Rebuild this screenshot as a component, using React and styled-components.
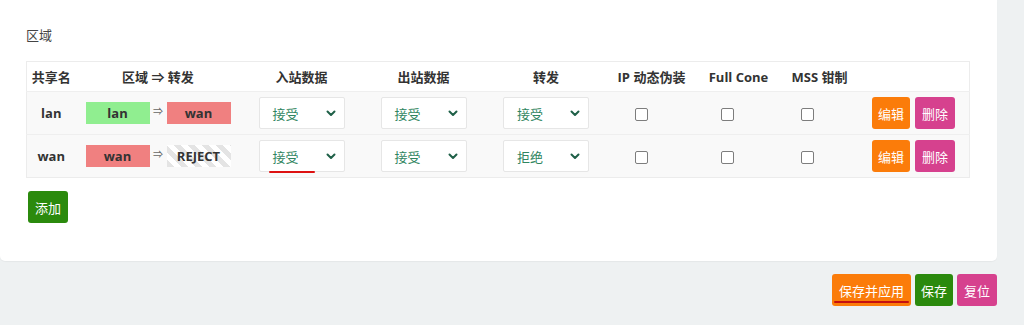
import React from "react";
import styled, { createGlobalStyle, css } from "styled-components";

const Global = createGlobalStyle`
  html, body { margin: 0; padding: 0; }
  body {
    background: #eef1f2;
    font-family: "Open Sans", "Noto Sans CJK SC", sans-serif;
    font-size: 13px;
    color: #333;
    width: 1024px;
    height: 325px;
    overflow: hidden;
  }
`;

const Page = styled.div`
  display: flex;
  flex-direction: column;
  width: 997px;
`;

const Card = styled.section`
  background: #fff;
  border-radius: 0 0 5px 5px;
  padding: 25px 27px 38px 26px;
  height: 261px;
  box-sizing: border-box;
  box-shadow: 0 1px 1px rgba(0,0,0,0.04);
`;

const Title = styled.div`
  font-size: 13px;
  color: #444;
  height: 20px;
  line-height: 20px;
  margin-bottom: 16px;
`;

const Table = styled.table`
  width: 944px;
  border-collapse: collapse;
  table-layout: fixed;
  border: 1px solid #ececec;
`;

const Th = styled.th`
  height: 29px;
  padding: 0;
  font-weight: 700;
  font-size: 13px;
  color: #333;
  text-align: ${(p) => p.$align || "center"};
  background: #fff;
`;

const Tr = styled.tr`
  background: #f9f9f9;
  border-top: 1px solid #efefef;
`;

const Td = styled.td`
  height: 42px;
  padding: 0;
  text-align: ${(p) => p.$align || "center"};
  font-weight: ${(p) => (p.$bold ? 700 : 400)};
  ${(p) => p.$pr && css`padding-right: ${p.$pr}px;`}
`;

const ZoneFlow = styled.div`
  display: flex;
  align-items: center;
  justify-content: center;
`;

const Badge = styled.span`
  display: inline-flex;
  align-items: center;
  justify-content: center;
  width: 64px;
  height: 22px;
  font-weight: 700;
  color: #333;
  ${(p) =>
    p.$kind === "lan"
      ? css`background: #90ee90;`
      : p.$kind === "wan"
      ? css`background: #f08080;`
      : css`
          background: repeating-linear-gradient(
            45deg,
            #e4e4e4 0px,
            #e4e4e4 5px,
            #ffffff 5px,
            #ffffff 10px
          );
        `}
`;

const Arrow = styled.span`
  width: 17px;
  text-align: center;
  font-size: 10px;
  color: #666;
  position: relative;
  top: -3px;
`;

const SelectBox = styled.div`
  position: relative;
  display: inline-flex;
  align-items: center;
  justify-content: space-between;
  width: 86px;
  height: 32px;
  box-sizing: border-box;
  background: #fff;
  border: 1px solid #e6e6e6;
  border-radius: 2px;
  padding: 0 8px 0 13px;
  color: #2f8560;
  font-size: 13px;
  vertical-align: middle;
`;

const Underline = styled.span`
  position: absolute;
  left: 9px;
  bottom: -2px;
  width: 46px;
  height: 2px;
  background: #d11;
  border-radius: 1px;
`;

const Check = styled.span`
  display: inline-block;
  width: 11px;
  height: 11px;
  border: 1px solid #7d7d7d;
  border-radius: 2px;
  background: #fff;
  vertical-align: middle;
  margin-right: ${(p) => p.$shift ?? 20}px;
`;

const Btn = styled.button`
  border: none;
  border-radius: 3px;
  height: 32px;
  padding: 0 ${(p) => p.$px ?? 7}px;
  color: #fff;
  font-family: "Noto Sans CJK SC", sans-serif;
  font-size: 13px;
  cursor: pointer;
  position: relative;
  background: ${(p) =>
    p.$variant === "orange" ? "#fb7c0a" : p.$variant === "pink" ? "#d6418e" : "#2b8a0d"};
`;

const Actions = styled.div`
  display: flex;
  justify-content: flex-end;
  gap: 5px;
`;

const AddRow = styled.div`
  margin-top: 13px;
  display: flex;
  padding-left: 2px;
`;

const Footer = styled.div`
  display: flex;
  justify-content: flex-end;
  gap: 4px;
  margin-top: 13px;
`;

const BtnLine = styled.span`
  position: absolute;
  left: 2px;
  right: 2px;
  bottom: 3px;
  height: 2px;
  background: #c41010;
  border-radius: 1px;
`;

const Chevron = () => (
  <svg width="10" height="7" viewBox="0 0 10 7">
    <path d="M1.5 1.5 L5 5 L8.5 1.5" fill="none" stroke="#1f6048" strokeWidth="2" strokeLinecap="round" strokeLinejoin="round" />
  </svg>
);

const Select = ({ value, marked }) => (
  <SelectBox>
    <span>{value}</span>
    <Chevron />
    {marked && <Underline />}
  </SelectBox>
);

const rows = [
  { name: "lan", src: "lan", dst: "wan", dstKind: "wan", in: "接受", out: "接受", fwd: "接受" },
  { name: "wan", src: "wan", dst: "REJECT", dstKind: "reject", in: "接受", out: "接受", fwd: "拒绝", mark: true },
];

export default function App() {
  return (
    <>
      <Global />
      <Page>
        <Card>
          <Title>区域</Title>
          <Table>
            <colgroup>
              <col style={{ width: 49 }} />
              <col style={{ width: 165 }} />
              <col style={{ width: 122 }} />
              <col style={{ width: 122 }} />
              <col style={{ width: 123 }} />
              <col style={{ width: 88 }} />
              <col style={{ width: 86 }} />
              <col style={{ width: 76 }} />
              <col />
            </colgroup>
            <thead>
              <tr>
                <Th>共享名</Th>
                <Th>区域 ⇒ 转发</Th>
                <Th>入站数据</Th>
                <Th>出站数据</Th>
                <Th>转发</Th>
                <Th>IP 动态伪装</Th>
                <Th>Full Cone</Th>
                <Th>MSS 钳制</Th>
                <Th></Th>
              </tr>
            </thead>
            <tbody>
              {rows.map((r) => (
                <Tr key={r.name}>
                  <Td $bold>{r.name}</Td>
                  <Td>
                    <ZoneFlow>
                      <Badge $kind={r.src}>{r.src}</Badge>
                      <Arrow>⇒</Arrow>
                      <Badge $kind={r.dstKind}>{r.dst}</Badge>
                    </ZoneFlow>
                  </Td>
                  <Td><Select value={r.in} marked={r.mark} /></Td>
                  <Td><Select value={r.out} /></Td>
                  <Td><Select value={r.fwd} /></Td>
                  <Td><Check $shift={20} /></Td>
                  <Td><Check $shift={22} /></Td>
                  <Td><Check $shift={24} /></Td>
                  <Td $pr={14}>
                    <Actions>
                      <Btn $variant="orange" $px={6}>编辑</Btn>
                      <Btn $variant="pink" $px={7}>删除</Btn>
                    </Actions>
                  </Td>
                </Tr>
              ))}
            </tbody>
          </Table>
          <AddRow>
            <Btn $variant="green" $px={7}>添加</Btn>
          </AddRow>
        </Card>
        <Footer>
          <Btn $variant="orange" $px={7}>
            保存并应用
            <BtnLine />
          </Btn>
          <Btn $variant="green" $px={6}>保存</Btn>
          <Btn $variant="pink" $px={7}>复位</Btn>
        </Footer>
      </Page>
    </>
  );
}
